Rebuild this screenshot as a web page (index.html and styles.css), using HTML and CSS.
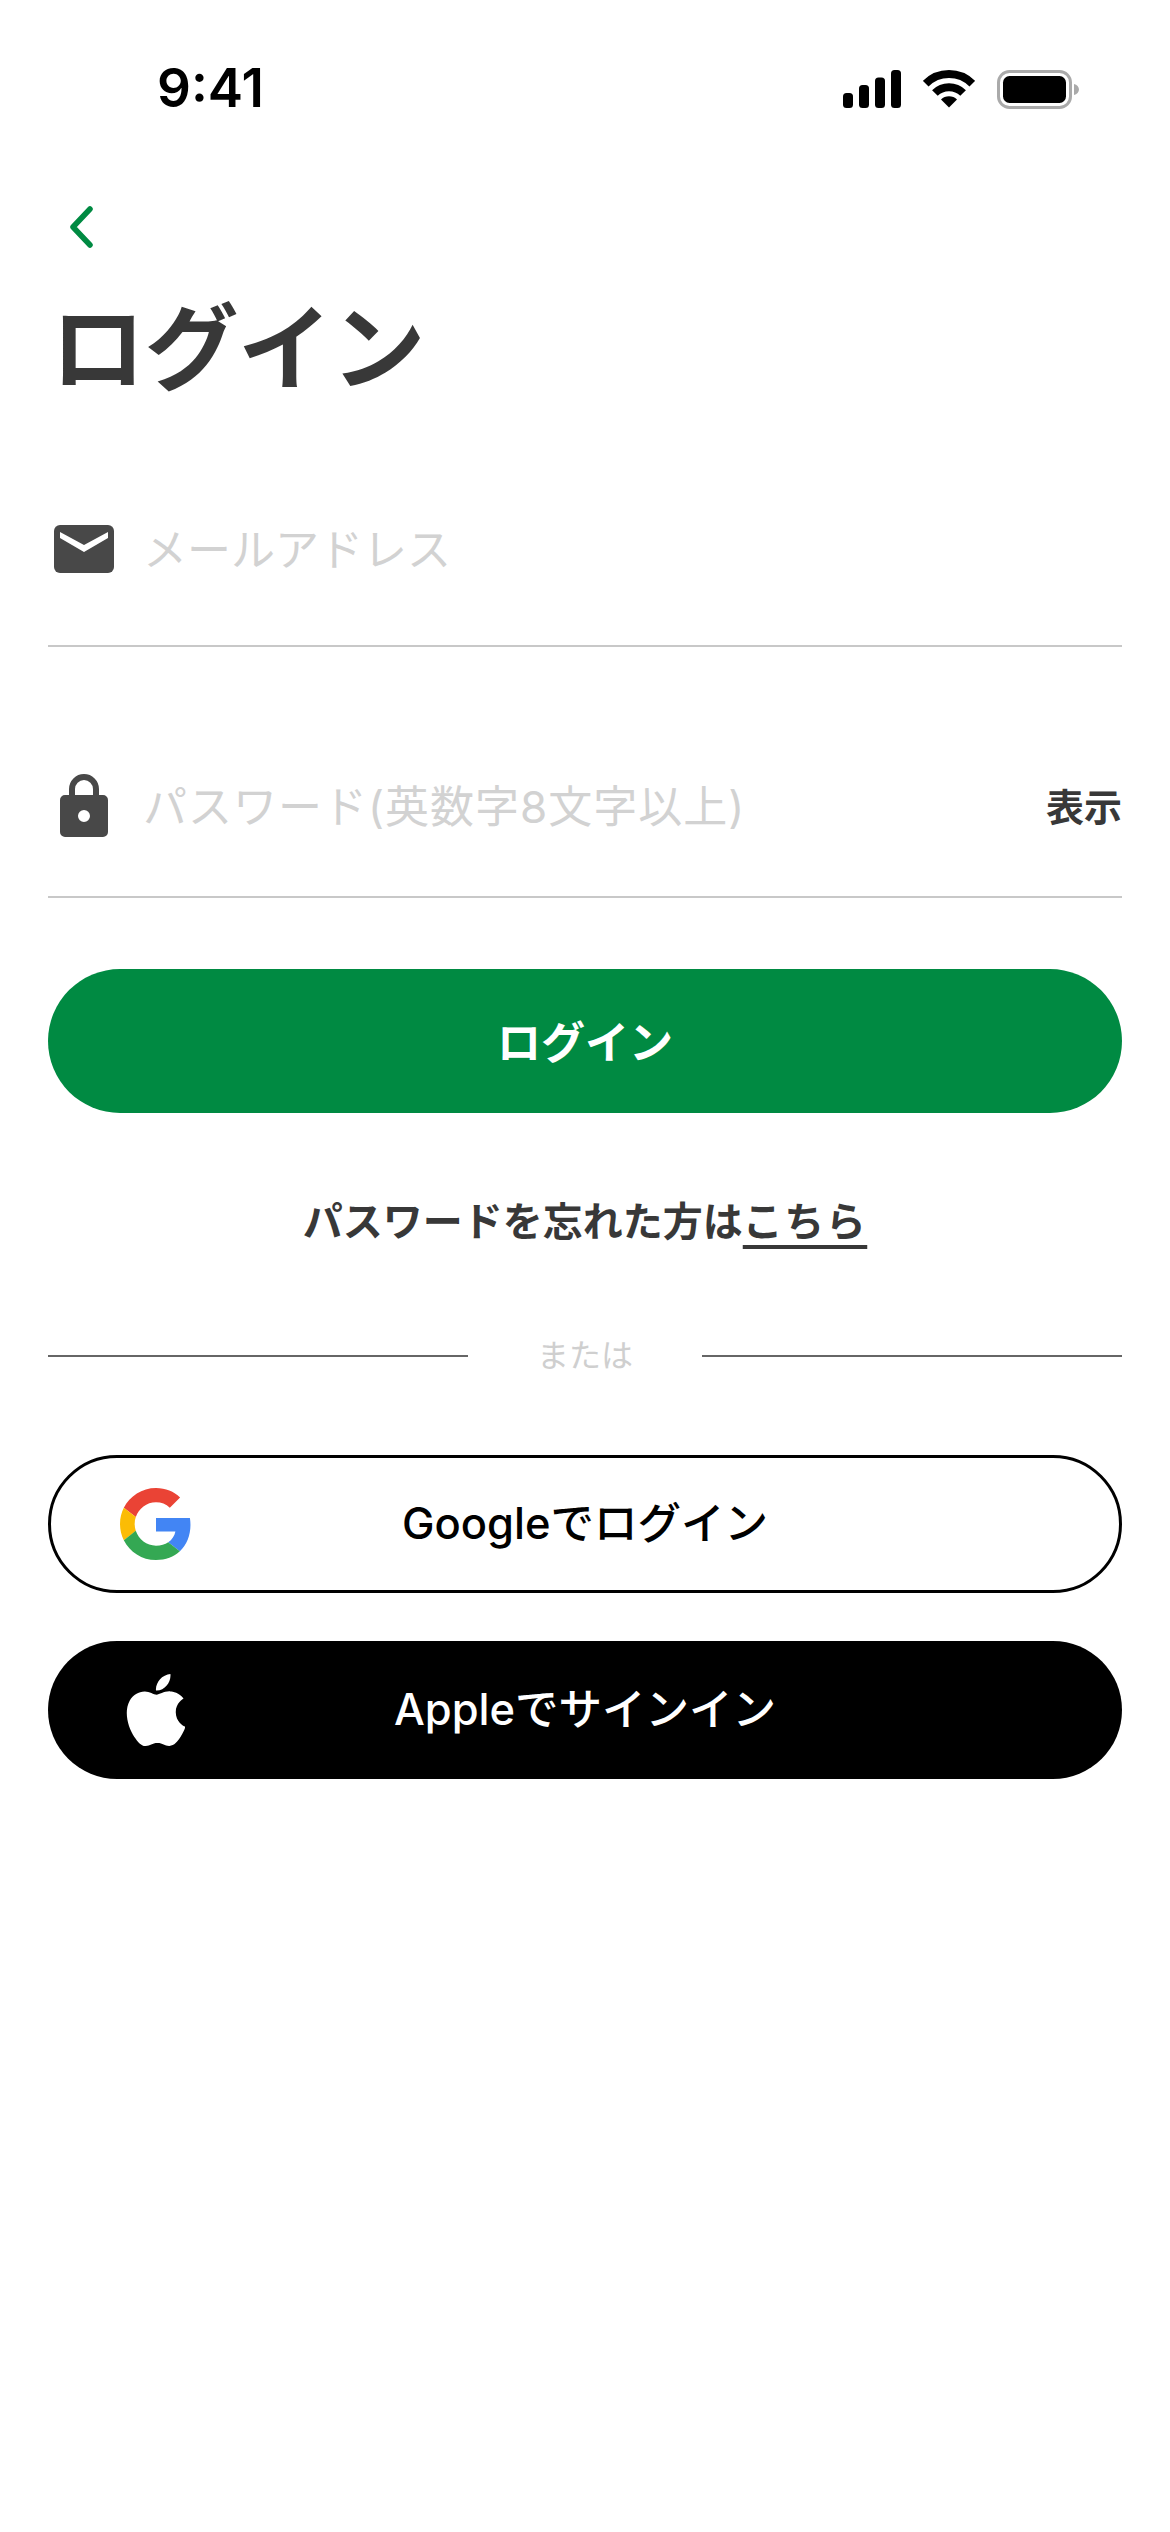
FILE: index.html
```html
<!DOCTYPE html>
<html lang="ja">
<head>
    <meta charset="UTF-8">
    <meta name="viewport" content="width=device-width, initial-scale=1.0">
    <title>ログイン</title>
    <link rel="stylesheet" href="styles.css">
</head>
<body>
    <div class="status-bar">
        <span class="status-time">9:41</span>
        <div class="status-icons">
            <svg width="58" height="38" viewBox="0 0 58 38"><rect x="0" y="23" width="10" height="15" rx="3.5"/><rect x="16" y="15" width="10" height="23" rx="3.5"/><rect x="32" y="7.5" width="10" height="30.5" rx="3.5"/><rect x="48" y="0" width="10" height="38" rx="3.5"/></svg>
            <svg width="52" height="38" viewBox="0 0 52 38"><path d="M2.700 13.700A33 33 0 0 1 49.300 13.700" fill="none" stroke="#000" stroke-width="8"/><path d="M11.900 23A20 20 0 0 1 40.100 23" fill="none" stroke="#000" stroke-width="8"/><path d="M26 37.500L18 29.500A11.300 11.300 0 0 1 34 29.500Z"/></svg>
            <svg width="83" height="40" viewBox="0 0 83 40"><rect x="1.500" y="1.500" width="72" height="36" rx="11" fill="none" stroke="#aaa" stroke-width="3"/><rect x="6" y="6" width="63" height="27" rx="6.500"/><path d="M77 14c3 .5 5 3 5 5.500s-2 5-5 5.500Z" fill="#aaa"/></svg>
        </div>
    </div>

    <div class="back-row">
        <svg class="back-icon" width="26" height="42" viewBox="0 0 26 42"><path d="M22 3L5 21L22 39" fill="none" stroke="#008a42" stroke-width="5.500" stroke-linecap="round" stroke-linejoin="round"/></svg>
    </div>
    <h1 class="page-title">ログイン</h1>

    <div class="field field-mail">
        <div class="field-icon">
            <svg width="60" height="48" viewBox="0 0 60 48"><rect width="60" height="48" rx="6" fill="#484848"/><path d="M6 7L30 20L54 7V13L30 27L6 13Z" fill="#fff"/></svg>
        </div>
        <span class="field-placeholder">メールアドレス</span>
    </div>

    <div class="field field-pass">
        <div class="field-icon">
            <svg width="48" height="63" viewBox="0 0 48 63"><path d="M12 24V15a12 12 0 0 1 24 0V24" fill="none" stroke="#484848" stroke-width="6"/><path d="M5 21H43a5 5 0 0 1 5 5V58a5 5 0 0 1-5 5H5a5 5 0 0 1-5-5V26a5 5 0 0 1 5-5ZM24 36a6 6 0 1 0 0 12a6 6 0 1 0 0-12Z" fill="#484848" fill-rule="evenodd"/></svg>
        </div>
        <span class="field-placeholder pass-placeholder">パスワード(英数字8文字以上)</span>
        <span class="field-toggle">表示</span>
    </div>

    <div class="btn-login">ログイン</div>

    <p class="forgot">パスワードを忘れた方は<a href="#">こちら</a></p>

    <div class="divider">
        <span class="divider-line"></span>
        <span class="divider-text">または</span>
        <span class="divider-line"></span>
    </div>

    <div class="btn-social btn-google">
        <svg class="social-icon" width="72" height="72" viewBox="0 0 48 48">
            <path fill="#EA4335" d="M24 9.500c3.540 0 6.710 1.220 9.210 3.600l6.850-6.850C35.900 2.380 30.470 0 24 0 14.620 0 6.510 5.380 2.560 13.220l7.980 6.190C12.430 13.720 17.740 9.500 24 9.500z"/>
            <path fill="#4285F4" d="M46.980 24.550c0-1.570-.15-3.090-.38-4.550H24v9.020h12.940c-.58 2.960-2.260 5.480-4.780 7.180l7.730 6c4.510-4.180 7.090-10.360 7.090-17.65z"/>
            <path fill="#FBBC05" d="M10.530 28.590c-.48-1.450-.76-2.990-.76-4.590s.27-3.140.76-4.590l-7.980-6.190C.92 16.460 0 20.120 0 24c0 3.880.92 7.540 2.560 10.780l7.970-6.190z"/>
            <path fill="#34A853" d="M24 48c6.480 0 11.930-2.130 15.890-5.810l-7.730-6c-2.150 1.450-4.920 2.300-8.160 2.300-6.260 0-11.570-4.220-13.470-9.910l-7.980 6.190C6.510 42.620 14.620 48 24 48z"/>
        </svg>
        <span class="social-label">Googleでログイン</span>
    </div>

    <div class="btn-social btn-apple">
        <svg class="social-icon" width="59" height="72" viewBox="2.300 0 19 24"><path fill="#fff" d="M12.152 6.896c-.948 0-2.415-1.078-3.960-1.040-2.040.027-3.910 1.183-4.961 3.014-2.117 3.675-.546 9.103 1.519 12.090 1.013 1.454 2.208 3.090 3.792 3.039 1.520-.065 2.090-.987 3.935-.987 1.831 0 2.350.987 3.960.948 1.637-.026 2.676-1.480 3.676-2.948 1.156-1.688 1.636-3.325 1.662-3.415-.039-.013-3.182-1.221-3.220-4.857-.026-3.040 2.480-4.494 2.597-4.559-1.429-2.090-3.623-2.324-4.390-2.376-2-.156-3.675 1.090-4.610 1.090zM15.530 3.830c.843-1.012 1.400-2.427 1.245-3.830-1.207.052-2.662.805-3.532 1.818-.78.896-1.454 2.338-1.273 3.714 1.338.104 2.715-.688 3.559-1.701"/></svg>
        <span class="social-label">Appleでサインイン</span>
    </div>
</body>
</html>
```

FILE: styles.css
```css
* {
    box-sizing: border-box;
}
body {
    font-family: 'Inter', 'Noto Sans CJK JP', sans-serif;
    background-color: #ffffff;
    color: #383838;
    margin: 0;
    padding: 0 48px;
    min-height: 100vh;
}
.status-bar {
    height: 130px;
    margin: 0 -48px;
    padding: 66px 90px 0 157px;
    display: flex;
    justify-content: space-between;
    align-items: flex-start;
}
.status-time {
    font-size: 53px;
    line-height: 44px;
    font-weight: 600;
    color: #000;
}
.status-icons {
    display: flex;
    align-items: flex-start;
    gap: 22px;
    padding-top: 4px;
}
.back-row {
    height: 126px;
    padding: 76px 0 0 20px;
}
.back-icon {
    display: block;
}
/* title */
.page-title {
    margin: 27px 0 0;
    padding-left: 3px;
    height: 132px;
    font-size: 94px;
    line-height: 132px;
    font-weight: 700;
    letter-spacing: -0.5px;
}
/* fields */
.field {
    display: flex;
    align-items: center;
    border-bottom: 2px solid #c8c8c8;
}
.field-mail {
    height: 232px;
    padding: 38px 0 0 6px;
}
.field-pass {
    height: 251px;
    padding: 68px 0 0 6px;
}
.field-icon {
    width: 60px;
    margin-right: 29px;
    display: flex;
    justify-content: center;
}
.field-icon svg {
    display: block;
}
.field-placeholder {
    flex: 1;
    font-size: 44px;
    color: #d2d2d2;
    padding-bottom: 4px;
}
.pass-placeholder {
    letter-spacing: 1px;
}
.field-toggle {
    font-size: 38px;
    font-weight: 700;
    padding-bottom: 3px;
}
.btn-login {
    margin-top: 71px;
    padding-bottom: 2px;
    height: 144px;
    background-color: #008a42;
    border-radius: 72px;
    color: #fff;
    font-size: 44px;
    font-weight: 700;
    display: flex;
    justify-content: center;
    align-items: center;
}
.forgot {
    margin: 80px 0 0;
    text-align: center;
    font-size: 40px;
    line-height: 58px;
    font-weight: 700;
}
.forgot a {
    color: #383838;
    letter-spacing: 1.5px;
    text-decoration: underline;
    text-underline-offset: 9px;
}
.divider {
    margin-top: 82px;
    display: flex;
    align-items: center;
}
.divider-line {
    flex: 1;
    height: 2px;
    background-color: #666;
}
.divider-text {
    width: 234px;
    text-align: center;
    font-size: 32px;
    line-height: 46px;
    color: #cfcfcf;
}
/* social buttons */
.btn-social {
    height: 138px;
    border-radius: 69px;
    display: grid;
    grid-template-columns: 1fr auto 1fr;
    align-items: center;
    font-size: 43.5px;
    font-weight: 500;
}
.social-label {
    padding-bottom: 8px;
}
.btn-google {
    margin-top: 76px;
    border: 3px solid #000;
    color: #000;
}
.btn-apple {
    margin-top: 48px;
    background-color: #000;
    color: #fff;
}
.btn-google .social-icon {
    margin-left: 69px;
}
.btn-apple .social-icon {
    margin-left: 78px;
}
```
